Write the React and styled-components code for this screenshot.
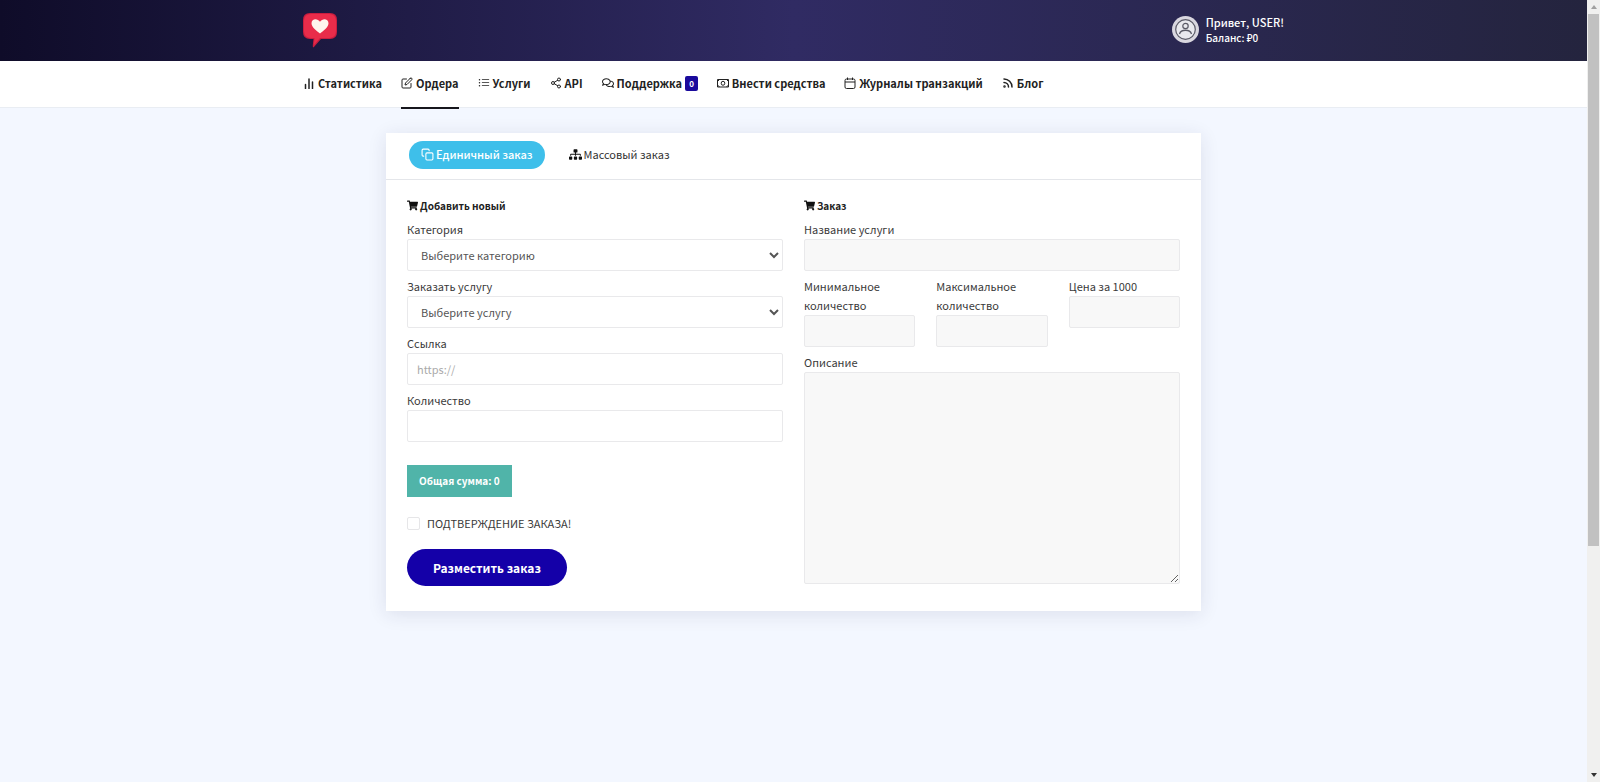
import React from "react";
import styled, { createGlobalStyle } from "styled-components";
import { FiCopy, FiEdit, FiRss, FiShare2 } from "react-icons/fi";
import { BsListUl } from "react-icons/bs";
import { FaRegComments, FaShoppingCart, FaSitemap } from "react-icons/fa";

const GlobalStyle = createGlobalStyle`
  *, *::before, *::after { box-sizing: border-box; }
  body {
    margin: 0;
    background: #f3f7ff;
    color: #3a3a3a;
    font-family: "Noto Sans CJK SC", "Noto Sans", sans-serif;
    font-size: 11px;
    line-height: 19px;
  }
  button, input, select, textarea { font: inherit; color: inherit; }
`;

const Shell = styled.div`
  display: grid;
  grid-template-columns: minmax(0, 1fr) 13px;
  min-height: 100vh;
`;

const Page = styled.div`
  display: flex;
  flex-direction: column;
`;

const TopBar = styled.header`
  background: linear-gradient(to right, #0f0c29, #302b63, #24243e);
  color: #fff;
`;

const Container = styled.div`
  display: flex;
  align-items: center;
  justify-content: space-between;
  max-width: 981px;
  height: ${(p) => p.$height}px;
  margin: 0 auto;
`;

const LogoLink = styled.a`
  display: flex;
`;

const UserBox = styled.div`
  display: flex;
  align-items: center;
  gap: 7px;
  padding-bottom: 2px;
`;

const UserText = styled.div`
  font-weight: 500;
  line-height: 15px;
`;

const Balance = styled.div`
  font-size: 10px;
`;

const NavBar = styled.nav`
  background: #fff;
  border-bottom: 1px solid #e9edf3;
`;

const NavList = styled.ul`
  display: flex;
  align-self: stretch;
  gap: 19px;
  margin: 0;
  padding: 0;
  list-style: none;
`;

const NavLink = styled.a`
  position: relative;
  display: flex;
  align-items: center;
  gap: 3px;
  height: 100%;
  padding-bottom: 2px;
  color: #222;
  font-weight: 700;
  text-decoration: none;
  white-space: nowrap;

  svg { width: 12px; height: 12px; }

  &[aria-current]::after {
    content: "";
    position: absolute;
    right: 0;
    bottom: -2px;
    left: 0;
    height: 2px;
    background: #16161c;
  }
`;

const Badge = styled.span`
  padding: 0 4px;
  border-radius: 2px;
  background: #1a0a9c;
  color: #fff;
  font-size: 8px;
  line-height: 15px;
`;

const Card = styled.main`
  width: 100%;
  max-width: 815px;
  margin: 25px auto;
  background: #fff;
  box-shadow: 0 3px 18px rgba(40, 40, 80, 0.11);
`;

const Tabs = styled.div`
  display: flex;
  align-items: center;
  gap: 12px;
  height: 47px;
  padding: 0 23px 3px;
  border-bottom: 1px solid #e4e6ea;
`;

const Tab = styled.button`
  display: flex;
  align-items: center;
  gap: 2px;
  height: 28px;
  padding: 0 12px 1px;
  border: 0;
  border-radius: 14px;
  background: ${(p) => (p.$active ? "#3ebfea" : "transparent")};
  color: ${(p) => (p.$active ? "#fff" : "#333")};
  font-weight: ${(p) => (p.$active ? 500 : 400)};
  cursor: pointer;

  svg { width: 13px; height: 13px; color: ${(p) => (p.$active ? "#fff" : "#111")}; }
`;

const Columns = styled.form`
  display: grid;
  grid-template-columns: 1fr 1fr;
  gap: 21px;
  padding: 16px 21px 25px;
`;

const Column = styled.section`
  display: flex;
  flex-direction: column;
  gap: 6px;
`;

const Heading = styled.h2`
  display: flex;
  align-items: center;
  gap: 2px;
  margin: 0 0 -1px;
  color: #222;
  font-size: 10px;
  line-height: 19px;

  svg { width: 11px; height: 11px; color: #111; }
`;

const FieldBox = styled.div`
  display: flex;
  flex-direction: column;
`;

const Triple = styled.div`
  display: grid;
  grid-template-columns: repeat(3, 1fr);
  align-items: start;
  gap: 21px;
`;

const controlStyle = `
  width: 100%;
  border: 1px solid #e9e9eb;
  border-radius: 2px;
  background: #fff;
  color: #555;
  outline: 0;
  &::placeholder { color: #aaa; opacity: 1; }
  &[readonly] { background: #f8f8f8; }
`;

const Input = styled.input`
  ${controlStyle}
  height: 32px;
  padding: 0 9px 1px;
`;

const Select = styled.select`
  ${controlStyle}
  height: 32px;
  padding: 0 9px 1px;
`;

const TextArea = styled.textarea`
  ${controlStyle}
  display: block;
  height: 212px;
  padding: 9px;
  resize: both;
`;

const Actions = styled.div`
  display: flex;
  flex-direction: column;
  align-items: flex-start;
  padding-top: 17px;
`;

const Total = styled.output`
  padding: 0 12px;
  background: #50b4a9;
  color: #fff;
  font-size: 10px;
  font-weight: 700;
  line-height: 32px;
`;

const Confirm = styled.label`
  display: flex;
  align-items: center;
  gap: 7px;
  margin: 17px 0 16px;
`;

const CheckBox = styled.input`
  appearance: none;
  width: 13px;
  height: 13px;
  margin: 0;
  border: 1px solid #e6e6e8;
  border-radius: 2px;
  background: #fff;
  &:checked { background: #1400a8; }
`;

const Submit = styled.button`
  height: 37px;
  padding: 0 26px 1px;
  border: 0;
  border-radius: 19px;
  background: #1400a8;
  color: #fff;
  font-size: 12px;
  font-weight: 700;
  cursor: pointer;
`;

const ScrollRail = styled.aside`
  position: sticky;
  top: 0;
  display: flex;
  flex-direction: column;
  height: 100vh;
  padding: 0 1px;
  background: #f0f0ef;
`;

const ScrollEnd = styled.div`
  display: flex;
  align-items: center;
  justify-content: center;
  height: 14px;
  color: ${(p) => p.$color};
`;

const ScrollTrack = styled.div`
  flex: 1;
`;

const ScrollThumb = styled.div`
  height: 70.5%;
  background: #c1c1c1;
`;

function Logo() {
  return (
    <svg width="34" height="35" viewBox="0 0 34 35" aria-hidden="true">
      <path d="M7 0H27Q34 0 34 7V19Q34 26 27 26H18L10.500 34.500Q9.500 34 9.800 32L10.500 26H7Q0 26 0 19V7Q0 0 7 0Z" fill="#c91d3f" />
      <path d="M8 1H26Q33 1 33 8V18Q33 25 26 25H17L11 32L11.500 25H8Q1 25 1 18V8Q1 1 8 1Z" fill="#e92c4a" />
      <path d="M17 20.500C14 18 8.500 14.500 8.500 10.300C8.500 5.500 14.500 4.800 17 8.800C19.500 4.800 25.500 5.500 25.500 10.300C25.500 14.500 20 18 17 20.500Z" fill="#fff5ee" />
    </svg>
  );
}

function Avatar() {
  return (
    <svg width="27" height="27" viewBox="0 0 27 27" aria-hidden="true">
      <circle cx="13.500" cy="13.500" r="13.500" fill="#d9d7df" />
      <g fill="none" stroke="#5a5a66">
        <circle cx="13.500" cy="13.500" r="9.800" fill="#e9e9ee" strokeWidth="1.200" />
        <circle cx="13.500" cy="10" r="2.700" strokeWidth="1.200" />
        <path d="M7.500 18C9 13 18 13 19.500 18" strokeWidth="1.300" />
      </g>
    </svg>
  );
}

function ChartIcon() {
  return (
    <svg viewBox="0 0 12 12" fill="none" stroke="currentColor" aria-hidden="true">
      <path d="M2.500 7.500V11.500M6 2V11.500M9.500 5V11.500" strokeWidth="1.500" strokeLinecap="round" />
    </svg>
  );
}

function MoneyIcon() {
  return (
    <svg viewBox="0 0 12 12" fill="none" stroke="currentColor" aria-hidden="true">
      <path d="M0.500 2.500H11.500V10H0.500Z" />
      <path d="M0.500 4.500L2.500 2.500M11.500 4.500L9.500 2.500M0.500 8L2.500 10M11.500 8L9.500 10" />
      <ellipse cx="6" cy="6.250" rx="1.800" ry="2" />
    </svg>
  );
}

function CalendarIcon() {
  return (
    <svg viewBox="0 0 12 12" fill="none" stroke="currentColor" aria-hidden="true">
      <rect x="1" y="2" width="10" height="9.500" rx="1.500" />
      <path d="M1 5H11M3.500 0.500V3M8.500 0.500V3" />
    </svg>
  );
}

function RssIcon() {
  return <FiRss strokeWidth={3} />;
}

function Arrow({ down }) {
  return (
    <svg width="6" height="4" viewBox="0 0 6 4" aria-hidden="true">
      <path d={down ? "M0 0H6L3 4Z" : "M0 4H6L3 0Z"} fill="currentColor" />
    </svg>
  );
}

function Field({ id, label, control: Control = Input, children, ...rest }) {
  return (
    <FieldBox>
      <label htmlFor={id}>{label}</label>
      <Control id={id} {...rest}>
        {children}
      </Control>
    </FieldBox>
  );
}

const links = [
  { label: "Статистика", icon: ChartIcon },
  { label: "Ордера", icon: FiEdit, current: true },
  { label: "Услуги", icon: BsListUl },
  { label: "API", icon: FiShare2 },
  { label: "Поддержка", icon: FaRegComments, badge: 0 },
  { label: "Внести средства", icon: MoneyIcon },
  { label: "Журналы транзакций", icon: CalendarIcon },
  { label: "Блог", icon: RssIcon },
];

export default function App() {
  return (
    <Shell>
      <GlobalStyle />
      <Page>
        <TopBar>
          <Container $height={61}>
            <LogoLink href="#" aria-label="Home">
              <Logo />
            </LogoLink>
            <UserBox>
              <Avatar />
              <UserText>
                <div>Привет, USER!</div>
                <Balance>Баланс: ₽0</Balance>
              </UserText>
            </UserBox>
          </Container>
        </TopBar>
        <NavBar>
          <Container $height={46}>
            <NavList>
              {links.map(({ label, icon: Icon, current, badge }) => (
                <li key={label}>
                  <NavLink href="#" aria-current={current ? "page" : undefined}>
                    <Icon />
                    {label}
                    {badge !== undefined && <Badge>{badge}</Badge>}
                  </NavLink>
                </li>
              ))}
            </NavList>
          </Container>
        </NavBar>
        <Card>
          <Tabs role="tablist">
            <Tab type="button" role="tab" aria-selected="true" $active>
              <FiCopy />
              Единичный заказ
            </Tab>
            <Tab type="button" role="tab" aria-selected="false">
              <FaSitemap />
              Массовый заказ
            </Tab>
          </Tabs>
          <Columns onSubmit={(e) => e.preventDefault()}>
            <Column>
              <Heading>
                <FaShoppingCart />
                Добавить новый
              </Heading>
              <Field id="category" label="Категория" control={Select}>
                <option>Выберите категорию</option>
              </Field>
              <Field id="service" label="Заказать услугу" control={Select}>
                <option>Выберите услугу</option>
              </Field>
              <Field id="link" label="Ссылка" placeholder="https://" />
              <Field id="quantity" label="Количество" />
              <Actions>
                <Total>Общая сумма: 0</Total>
                <Confirm>
                  <CheckBox type="checkbox" />
                  ПОДТВЕРЖДЕНИЕ ЗАКАЗА!
                </Confirm>
                <Submit type="submit">Разместить заказ</Submit>
              </Actions>
            </Column>
            <Column>
              <Heading>
                <FaShoppingCart />
                Заказ
              </Heading>
              <Field id="name" label="Название услуги" readOnly />
              <Triple>
                <Field id="min" label="Минимальное количество" readOnly />
                <Field id="max" label="Максимальное количество" readOnly />
                <Field id="price" label="Цена за 1000" readOnly />
              </Triple>
              <Field id="description" label="Описание" control={TextArea} readOnly />
            </Column>
          </Columns>
        </Card>
      </Page>
      <ScrollRail aria-hidden="true">
        <ScrollEnd $color="#a0a0a0">
          <Arrow />
        </ScrollEnd>
        <ScrollTrack>
          <ScrollThumb />
        </ScrollTrack>
        <ScrollEnd $color="#333">
          <Arrow down />
        </ScrollEnd>
      </ScrollRail>
    </Shell>
  );
}
